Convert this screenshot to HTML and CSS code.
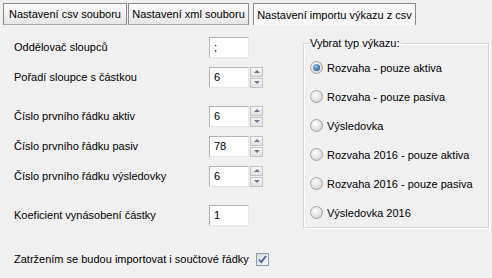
FILE: index.html
```html
<!DOCTYPE html>
<html lang="cs">
<head>
<meta charset="utf-8">
<title>Nastavení importu výkazu z csv</title>
<link rel="stylesheet" href="styles.css">
</head>
<body>
<div class="tabs">
  <div class="tab t1">Nastavení csv souboru</div>
  <div class="tab t2">Nastavení xml souboru</div>
  <div class="tab t3 active">Nastavení importu výkazu z csv</div>
</div>
<div class="panel">
  <div class="left">
    <div class="row">
      <span class="label">Oddělovač sloupců</span>
      <span class="field">;</span>
    </div>
    <div class="row">
      <span class="label">Pořadí sloupce s částkou</span>
      <span class="field">6</span>
      <span class="spin"><span class="sb up"></span><span class="sb down"></span></span>
    </div>
    <div class="row gap">
      <span class="label">Číslo prvního řádku aktiv</span>
      <span class="field">6</span>
      <span class="spin"><span class="sb up"></span><span class="sb down"></span></span>
    </div>
    <div class="row">
      <span class="label">Číslo prvního řádku pasiv</span>
      <span class="field">78</span>
      <span class="spin"><span class="sb up"></span><span class="sb down"></span></span>
    </div>
    <div class="row">
      <span class="label">Číslo prvního řádku výsledovky</span>
      <span class="field">6</span>
      <span class="spin"><span class="sb up"></span><span class="sb down"></span></span>
    </div>
    <div class="row gap">
      <span class="label">Koeficient vynásobení částky</span>
      <span class="field">1</span>
    </div>
    <div class="row check-row">
      <span class="label">Zatržením se budou importovat i součtové řádky</span>
      <span class="check"><svg width="9" height="9" viewBox="0 0 9 9"><path d="M1 4.5 L3.3 7 L8 1" fill="none" stroke="#4a5dab" stroke-width="1.8"/></svg></span>
    </div>
  </div>
  <fieldset class="group">
    <legend>Vybrat typ výkazu:</legend>
    <div class="opt"><span class="radio on"></span>Rozvaha - pouze aktiva</div>
    <div class="opt"><span class="radio"></span>Rozvaha - pouze pasiva</div>
    <div class="opt"><span class="radio"></span>Výsledovka</div>
    <div class="opt"><span class="radio"></span>Rozvaha 2016 - pouze aktiva</div>
    <div class="opt"><span class="radio"></span>Rozvaha 2016 - pouze pasiva</div>
    <div class="opt"><span class="radio"></span>Výsledovka 2016</div>
  </fieldset>
</div>
</body>
</html>
```
FILE: styles.css
```css
html, body {
  margin: 0;
  padding: 0;
  background: #f0f0f0;
  width: 492px;
  height: 278px;
  overflow: hidden;
  font-family: "Liberation Sans", Arial, sans-serif;
  font-size: 11px;
  color: #000;
}
.tabs {
  display: flex;
  align-items: flex-start;
  padding: 3px 0 0 3px;
  height: 22px;
}
.tab {
  box-sizing: border-box;
  height: 22px;
  display: flex;
  align-items: center;
  justify-content: center;
  border: 1px solid #8c8c8c;
  border-bottom-color: #a8a8a8;
  background: linear-gradient(#fbfbfb, #e6e6e6);
  white-space: nowrap;
}
.t1 { width: 124px; }
.t2 { width: 121px; margin-left: 1px; }
.t3 {
  width: 163px;
  margin-left: 4px;
  background: #f7f7f7;
  border-color: #8c8c8c;
  border-bottom: none;
  height: 22px;
}
.panel {
  display: flex;
  align-items: flex-start;
}
.left {
  width: 290px;
  padding: 7px 0 0 14px;
  display: flex;
  flex-direction: column;
}
.row {
  height: 30px;
  display: flex;
  align-items: center;
}
.row.gap { margin-top: 9px; }
.row.check-row { margin-top: 14px; }
.label {
  width: 195px;
  white-space: nowrap;
}
.field {
  box-sizing: border-box;
  width: 40px;
  height: 21px;
  background: #fff;
  border: 1px solid;
  border-color: #b5b5b5 #e6e6e6 #e6e6e6 #b5b5b5;
  padding: 2px 0 0 4px;
  line-height: 14px;
}
.spin {
  display: flex;
  flex-direction: column;
  margin-left: 1px;
  gap: 1px;
}
.sb {
  box-sizing: border-box;
  width: 13px;
  height: 10px;
  border: 1px solid #c2c2c2;
  background: linear-gradient(#f7f7f7, #e2e2e2);
  display: flex;
  align-items: center;
  justify-content: center;
}
.sb::after {
  content: "";
  width: 0;
  height: 0;
  border-left: 3px solid transparent;
  border-right: 3px solid transparent;
}
.sb.up::after { border-bottom: 3px solid #6a7a90; }
.sb.down::after { border-top: 3px solid #6a7a90; }
.check-row .label { width: 242px; }
.check {
  box-sizing: border-box;
  width: 13px;
  height: 13px;
  border: 1px solid #8f9cb0;
  background: linear-gradient(135deg, #dcdcdc, #f8f8f8);
  display: flex;
  align-items: center;
  justify-content: center;
}
.group {
  box-sizing: border-box;
  margin: 12px 0 0 -1px;
  width: 186px;
  height: 191px;
  border: 1px solid #d5d5d5;
  box-shadow: inset 1px 1px 0 #fff, 1px 1px 0 #fff;
  padding: 4px 0 0 6px;
  min-width: 0;
}
.group legend {
  padding: 0 2px 0 0;
  margin-left: 0;
  font-size: 11px;
}
.opt {
  height: 29px;
  display: flex;
  align-items: center;
  white-space: nowrap;
}
.radio {
  box-sizing: border-box;
  width: 13px;
  height: 13px;
  border-radius: 50%;
  border: 1px solid #a3a3a3;
  background: radial-gradient(circle at 40% 35%, #ffffff, #d8d8d8 75%);
  margin-right: 4px;
  display: flex;
  align-items: center;
  justify-content: center;
}
.radio.on::after {
  content: "";
  width: 7px;
  height: 7px;
  border-radius: 50%;
  background: radial-gradient(circle at 40% 35%, #8fc4ec, #1e5a8e 80%);
}
```
